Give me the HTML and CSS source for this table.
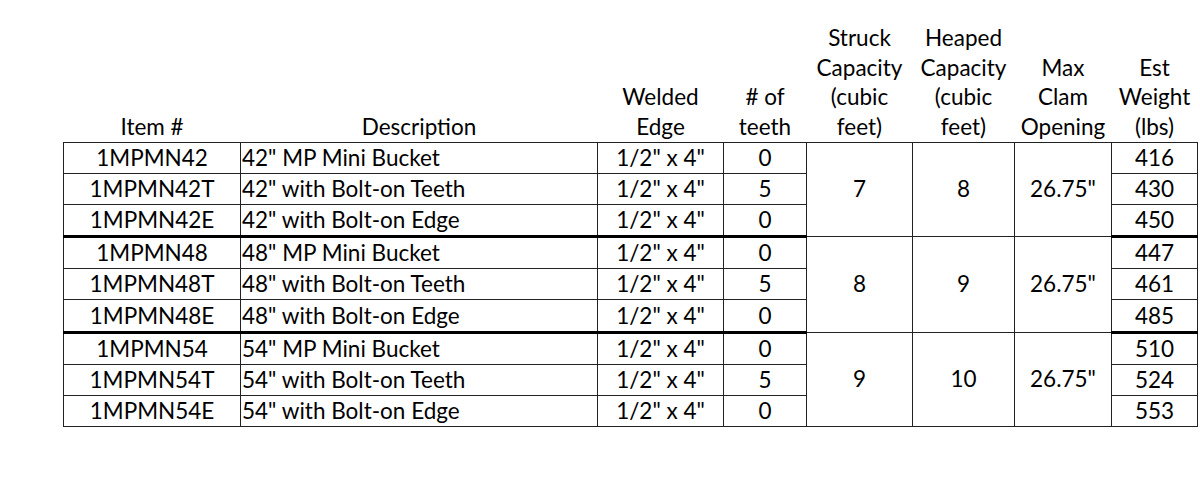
FILE: index.html
```html
<!DOCTYPE html>
<html>
<head>
<meta charset="utf-8">
<link rel="stylesheet" href="styles.css">
</head>
<body>
<table class="spec">
  <colgroup>
    <col class="c-item"><col class="c-desc"><col class="c-edge"><col class="c-teeth">
    <col class="c-struck"><col class="c-heaped"><col class="c-clam"><col class="c-weight">
  </colgroup>
  <thead>
    <tr>
      <th>Item #</th>
      <th>Description</th>
      <th>Welded<br>Edge</th>
      <th># of<br>teeth</th>
      <th>Struck<br>Capacity<br>(cubic<br>feet)</th>
      <th>Heaped<br>Capacity<br>(cubic<br>feet)</th>
      <th>Max<br>Clam<br>Opening</th>
      <th>Est<br>Weight<br>(lbs)</th>
    </tr>
  </thead>
  <tbody>
    <tr><td>1MPMN42</td><td class="desc">42" MP Mini Bucket</td><td>1/2" x 4"</td><td>0</td><td rowspan="3" class="mid">7</td><td rowspan="3" class="mid">8</td><td rowspan="3" class="mid">26.75"</td><td>416</td></tr>
    <tr><td>1MPMN42T</td><td class="desc">42" with Bolt-on Teeth</td><td>1/2" x 4"</td><td>5</td><td>430</td></tr>
    <tr class="grp-end"><td>1MPMN42E</td><td class="desc">42" with Bolt-on Edge</td><td>1/2" x 4"</td><td>0</td><td>450</td></tr>
    <tr><td>1MPMN48</td><td class="desc">48" MP Mini Bucket</td><td>1/2" x 4"</td><td>0</td><td rowspan="3" class="mid">8</td><td rowspan="3" class="mid">9</td><td rowspan="3" class="mid">26.75"</td><td>447</td></tr>
    <tr><td>1MPMN48T</td><td class="desc">48" with Bolt-on Teeth</td><td>1/2" x 4"</td><td>5</td><td>461</td></tr>
    <tr class="grp-end"><td>1MPMN48E</td><td class="desc">48" with Bolt-on Edge</td><td>1/2" x 4"</td><td>0</td><td>485</td></tr>
    <tr><td>1MPMN54</td><td class="desc">54" MP Mini Bucket</td><td>1/2" x 4"</td><td>0</td><td rowspan="3" class="mid">9</td><td rowspan="3" class="mid">10</td><td rowspan="3" class="mid">26.75"</td><td>510</td></tr>
    <tr><td>1MPMN54T</td><td class="desc">54" with Bolt-on Teeth</td><td>1/2" x 4"</td><td>5</td><td>524</td></tr>
    <tr><td>1MPMN54E</td><td class="desc">54" with Bolt-on Edge</td><td>1/2" x 4"</td><td>0</td><td>553</td></tr>
  </tbody>
</table>
</body>
</html>
```

FILE: styles.css
```css
html, body {
  margin: 0;
  padding: 0;
  background: #fff;
}

body {
  font-family: Lato, "Liberation Sans", sans-serif;
  font-size: 22.5px;
  color: #000;
}

.spec {
  border-collapse: collapse;
  table-layout: fixed;
  margin-left: 63px;
  width: 1134px;
}

.c-item { width: 177px; }
.c-desc { width: 357px; }
.c-edge { width: 126px; }
.c-teeth { width: 83px; }
.c-struck { width: 106px; }
.c-heaped { width: 102px; }
.c-clam { width: 97px; }
.c-weight { width: 86px; }

.spec th {
  font-weight: normal;
  vertical-align: bottom;
  text-align: center;
  line-height: 29.6px;
  height: 142px;
  padding: 0;
  box-sizing: border-box;
  white-space: nowrap;
}

.spec td {
  border: 1px solid #222;
  text-align: center;
  vertical-align: middle;
  height: 30.2px;
  padding: 0 2px;
  line-height: 28px;
  white-space: nowrap;
}

.spec td.desc {
  text-align: left;
  padding-left: 1px;
}

.spec td.mid {
  vertical-align: middle;
}

.spec tr.grp-end td {
  border-bottom: 3px solid #000;
}
```
